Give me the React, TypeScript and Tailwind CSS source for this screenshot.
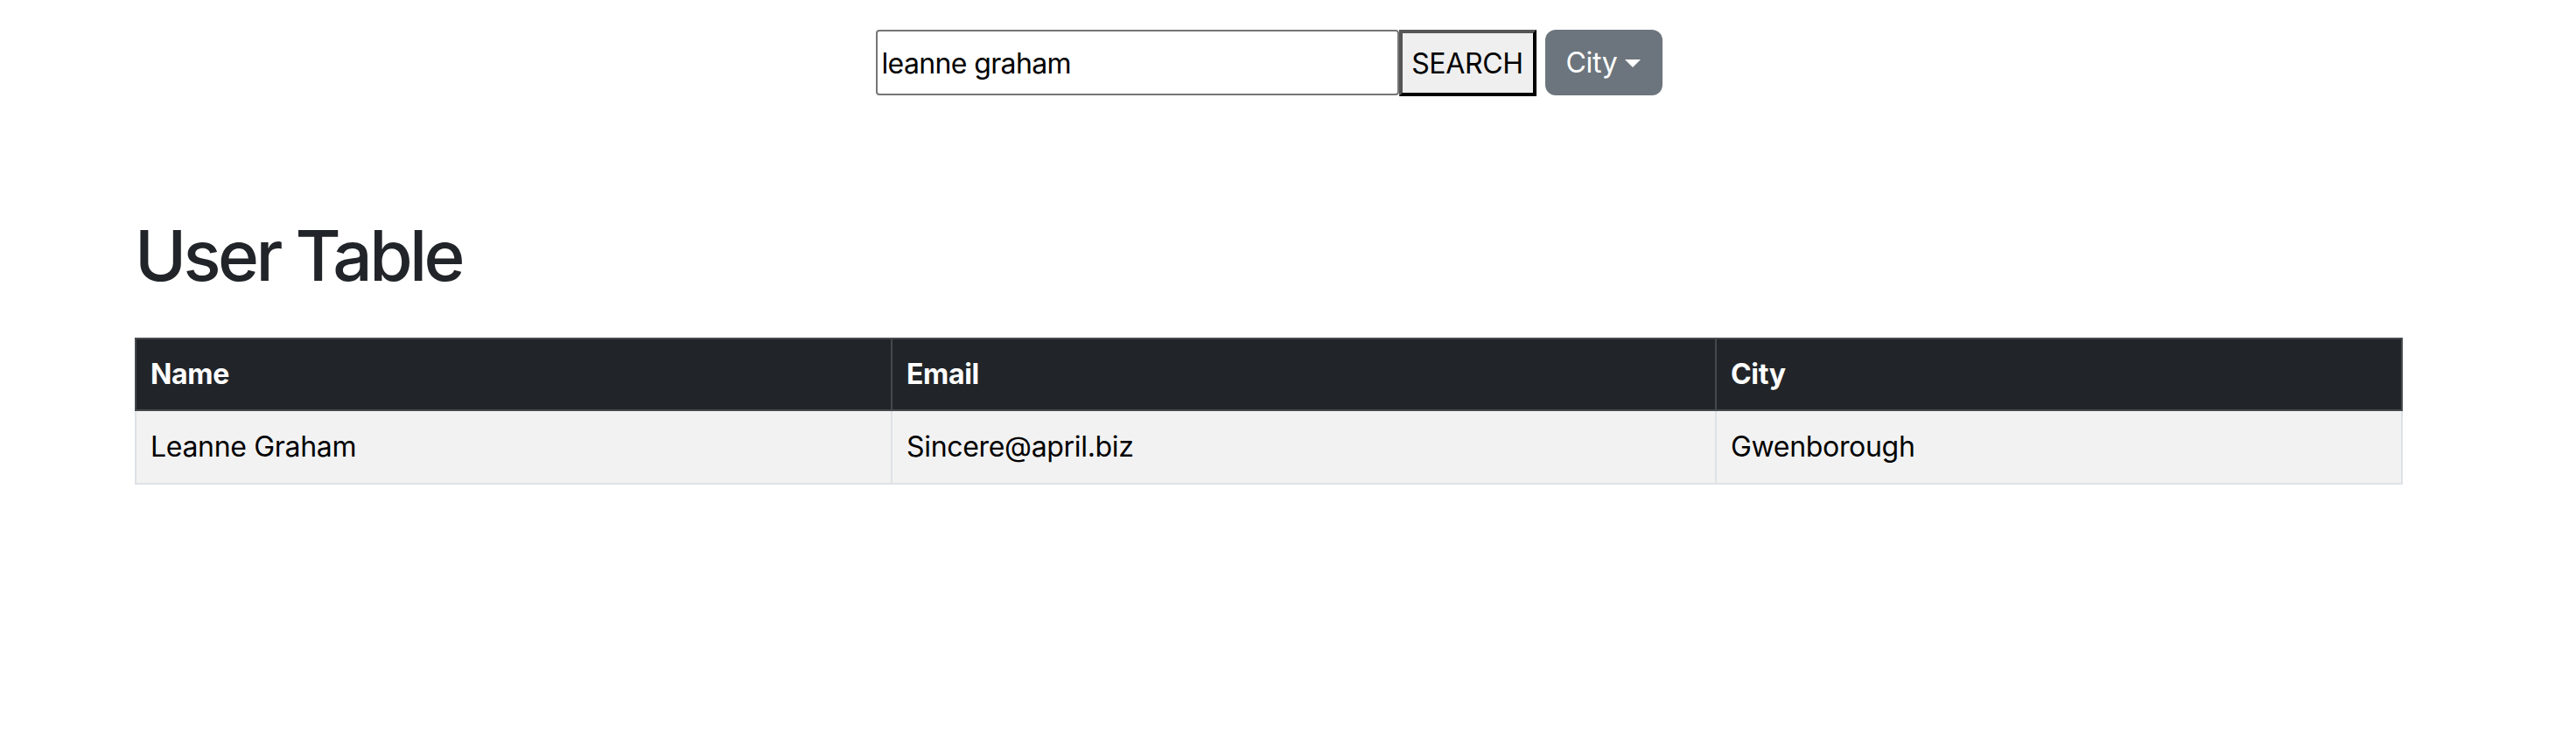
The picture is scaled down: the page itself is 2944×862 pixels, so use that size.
import React, { useState } from 'react';

const App: React.FC = () => {
  const [query, setQuery] = useState('leanne graham');

  const [users] = useState([
    { id: 1, name: 'Leanne Graham', email: 'Sincere@april.biz', city: 'Gwenborough' },
  ]);

  return (
    <div className="min-h-[862px] w-[2900px] bg-white font-[Inter,'Noto_Sans',sans-serif] tracking-[-0.02em] text-[#212529]">
      {/* Search bar */}
      <div className="flex justify-center pt-[34px]">
        <input
          value={query}
          onChange={(e) => setQuery(e.target.value)}
          className="h-[75px] w-[598px] rounded-[4px] border-2 border-[#767676] bg-white px-[5px] pt-[2px] text-[32px] tracking-[-0.02em] text-black outline-none"
        />
        <button className="h-[76px] w-[157px] border-4 border-t-[#555555] border-l-[#555555] border-r-black border-b-black bg-[#efefef] pt-[2px] text-[32px] text-black">
          SEARCH
        </button>
        <button className="ml-[10px] flex h-[75px] w-[134px] items-center justify-center rounded-[12px] bg-[#6c757d] text-[32px] text-white">
          City
          <span className="ml-[9px] mt-[2px] inline-block h-0 w-0 border-x-[9px] border-t-[9px] border-x-transparent border-t-white"></span>
        </button>
      </div>

      {/* User table */}
      <div className="pl-[154px]">
        <h1 className="mt-[134px] text-[80px] leading-[96px] font-medium tracking-[-0.045em]">User Table</h1>
        <table className="mt-[46px] w-[2592px] table-fixed border-collapse text-[32px]">
          <thead>
            <tr className="bg-[#212529] text-white">
              <th className="h-[82px] w-[864px] border-2 border-[#45494c] px-[16px] text-left font-bold">Name</th>
              <th className="h-[82px] w-[942px] border-2 border-[#45494c] px-[16px] text-left font-bold">Email</th>
              <th className="h-[82px] border-2 border-[#45494c] px-[16px] text-left font-bold">City</th>
            </tr>
          </thead>
          <tbody>
            {users.map((user) => (
              <tr key={user.id} className="bg-[#f2f2f2] text-black">
                <td className="h-[84px] border-2 border-[#dee2e6] px-[16px]">{user.name}</td>
                <td className="h-[84px] border-2 border-[#dee2e6] px-[16px]">{user.email}</td>
                <td className="h-[84px] border-2 border-[#dee2e6] px-[16px]">{user.city}</td>
              </tr>
            ))}
          </tbody>
        </table>
      </div>
    </div>
  );
};

export default App;
